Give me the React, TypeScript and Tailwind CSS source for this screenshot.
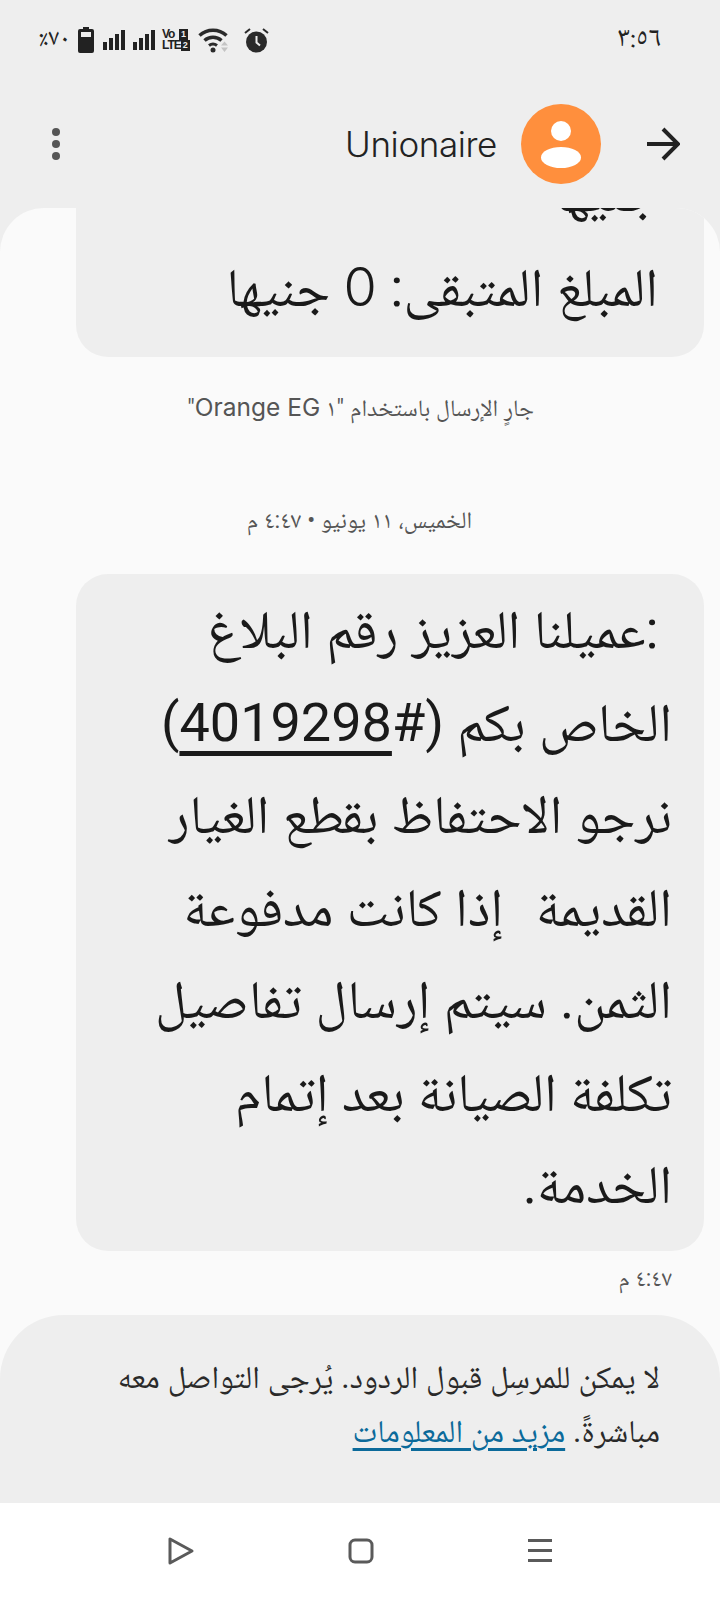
const arabic = "font-['Roboto','Noto_Naskh_Arabic','Noto_Sans_Arabic','DejaVu_Sans',sans-serif]";

// Battery, signal, VoLTE, wifi and alarm glyphs of the status bar
function SignalBars() {
  return (
    <svg width="22" height="20" viewBox="0 0 22 20" fill="#222">
      <rect x="0" y="12" width="4" height="8" />
      <rect x="6" y="8" width="4" height="12" />
      <rect x="12" y="4" width="4" height="16" />
      <rect x="18" y="0" width="4" height="20" />
    </svg>
  );
}

function StatusIcons() {
  return (
    <div className="flex items-center" dir="ltr">
      <span dir="rtl" className="w-[30px] text-[24px] leading-[30px] text-[#222] font-['Noto_Naskh_Arabic','DejaVu_Sans',sans-serif]">٧٠٪</span>
      <svg width="16" height="26" viewBox="0 0 16 26" className="ml-[8px]">
        <path d="M5 0h6v2h3a2 2 0 0 1 2 2v20a2 2 0 0 1-2 2H2a2 2 0 0 1-2-2V4a2 2 0 0 1 2-2h3z" fill="#222" />
        <rect x="3" y="5" width="10" height="5" fill="#eee" />
      </svg>
      <div className="ml-[9px]"><SignalBars /></div>
      <div className="ml-[8px]"><SignalBars /></div>
      <div className="ml-[7px] flex flex-col text-[#222] font-['Liberation_Sans',sans-serif] font-bold leading-[11px] text-[12px] tracking-[-1px] w-[26px]">
        <span className="flex justify-between">Vo<span className="bg-[#222] text-[#eee] px-[2px] text-[9px] tracking-normal">1</span></span>
        <span className="flex justify-between">LTE<span className="bg-[#222] text-[#eee] px-[2px] text-[9px] tracking-normal">2</span></span>
      </div>
      <svg width="31" height="26" viewBox="0 0 31 26" className="ml-[10px]">
        <path d="M1.500 8.500a20 20 0 0 1 27 0" fill="none" stroke="#2a2a2a" strokeWidth="3.500" />
        <path d="M6.500 13.500a13 13 0 0 1 17 0" fill="none" stroke="#2a2a2a" strokeWidth="3.500" />
        <path d="M11 18.500a6.500 6.500 0 0 1 8 0" fill="none" stroke="#2a2a2a" strokeWidth="3" />
        <circle cx="15" cy="23" r="2.500" fill="#2a2a2a" />
        <path d="M26.500 14.500l3.500 4h-7zM26.500 25l3.500-4.500h-7z" fill="#c4c4c4" />
      </svg>
      <svg width="25" height="26" viewBox="0 0 25 26" className="ml-[15px]">
        <circle cx="12.500" cy="15" r="10.500" fill="#2a2a2a" />
        <path d="M12.500 9v6.500l3.500 3" fill="none" stroke="#eee" strokeWidth="2" />
        <path d="M1 6l5-4M24 6l-5-4" stroke="#2a2a2a" strokeWidth="2" fill="none" />
      </svg>
    </div>
  );
}

export default function App() {
  return (
    <div className="w-[720px] h-[1600px] bg-[#eeeeee] flex flex-col overflow-hidden text-[#1a1a1a]" dir="ltr">
      {/* Status bar */}
      <div className="h-[80px] shrink-0 flex items-center justify-between pl-[40px] pr-[59px]">
        <StatusIcons />
        <span className="text-[28px] leading-[34px] text-[#222] font-['Noto_Naskh_Arabic','DejaVu_Sans',sans-serif]">٣:٥٦</span>
      </div>

      {/* Conversation header */}
      <div className="h-[128px] shrink-0 flex items-center pl-[48px] pr-[40px]">
        <svg width="16" height="34" viewBox="0 0 16 34" fill="#555">
          <circle cx="8" cy="5" r="4" />
          <circle cx="8" cy="17" r="4" />
          <circle cx="8" cy="29" r="4" />
        </svg>
        <span className="ml-auto text-[35px] font-['Inter',sans-serif] font-light tracking-[-0.4px] text-[#222]">Unionaire</span>
        <div className="ml-[24px] w-[80px] h-[80px] rounded-full bg-[#ff8f3d] flex flex-col items-center justify-center">
          <div className="w-[20px] h-[20px] rounded-full bg-white" />
          <div className="mt-[6px] w-[40px] h-[21px] rounded-[50%] bg-white" />
        </div>
        <svg width="34" height="34" viewBox="0 0 34 34" fill="none" stroke="#222" strokeWidth="4" className="ml-[45px]">
          <path d="M1 17h30M17 2l15 15-15 15" />
        </svg>
      </div>

      {/* Message list */}
      <div className="flex-1 min-h-0 bg-[#fafafa] rounded-t-[44px] overflow-hidden flex flex-col" dir="rtl">
        <div className={`ml-[76px] mr-[16px] h-[149px] shrink-0 rounded-b-[32px] bg-[#eeeeee] pr-[46px] overflow-hidden flex flex-col justify-end pb-[22px] text-[54px] leading-[94px] ${arabic}`}>
          <p className="whitespace-nowrap">جنيها</p>
          <p className="whitespace-nowrap">المبلغ المتبقى: <span className="font-['Inter',sans-serif] font-light">0</span> جنيها</p>
        </div>
        <p className={`mt-[35px] mr-[186px] text-[23.500px] leading-[30px] text-[#555] ${arabic}`}>
          جارٍ الإرسال باستخدام "١ <span className="font-['Inter',sans-serif] text-[24.500px]">Orange EG</span>"
        </p>
        <p className={`mt-[82px] mr-[248px] text-[23.500px] leading-[30px] text-[#555] ${arabic}`}>الخميس، ١١ يونيو • ٤:٤٧ م</p>

        <div className={`mt-[39px] ml-[76px] mr-[16px] shrink-0 rounded-[32px] bg-[#eeeeee] pt-[10px] pb-[19px] pr-[32px] pl-[32px] text-[54px] leading-[92.500px] whitespace-nowrap ${arabic}`}>
          <p>&nbsp;:عميلنا العزيز رقم البلاغ</p>
          <p>الخاص بكم (#<span className="underline decoration-[5px] underline-offset-[10px] tracking-[-0.5px]">4019298</span>)</p>
          <p>نرجو الاحتفاظ بقطع الغيار</p>
          <p><span className="ml-[6px]">القديمة</span>&nbsp; إذا كانت مدفوعة</p>
          <p>الثمن. سيتم إرسال تفاصيل</p>
          <p>تكلفة الصيانة بعد إتمام</p>
          <p>الخدمة.</p>
        </div>
        <p className={`mt-[14px] mr-[48px] text-[23px] leading-[28px] text-[#555] ${arabic}`}>٤:٤٧ م</p>

        {/* Reply-disabled notice */}
        <div className={`mt-[22px] h-[188px] shrink-0 rounded-t-[64px] bg-[#eeeeee] pt-[35px] pr-[60px] pl-[60px] text-[31.800px] leading-[54px] text-[#2a2a2a] whitespace-nowrap ${arabic}`}>
          <p>لا يمكن للمرسِل قبول الردود. يُرجى التواصل معه</p>
          <p>مباشرةً. <span className="text-[#0b6a9a] underline decoration-[3px] underline-offset-[6px]">مزيد من المعلومات</span></p>
        </div>

        {/* Navigation bar */}
        <div className="flex-1 bg-white flex items-center justify-center gap-[153px]" dir="ltr">
          <svg width="28" height="30" viewBox="0 0 28 30" fill="none" stroke="#5a5a5a" strokeWidth="3" strokeLinejoin="round">
            <path d="M3 3v24l22-12z" />
          </svg>
          <svg width="26" height="26" viewBox="0 0 26 26" fill="none" stroke="#5a5a5a" strokeWidth="3">
            <rect x="2" y="2" width="22" height="22" rx="5" />
          </svg>
          <svg width="26" height="26" viewBox="0 0 26 26" fill="#5a5a5a">
            <rect x="1" y="1" width="24" height="3" />
            <rect x="1" y="11" width="24" height="3" />
            <rect x="1" y="21" width="24" height="3" />
          </svg>
        </div>
      </div>
    </div>
  );
}
